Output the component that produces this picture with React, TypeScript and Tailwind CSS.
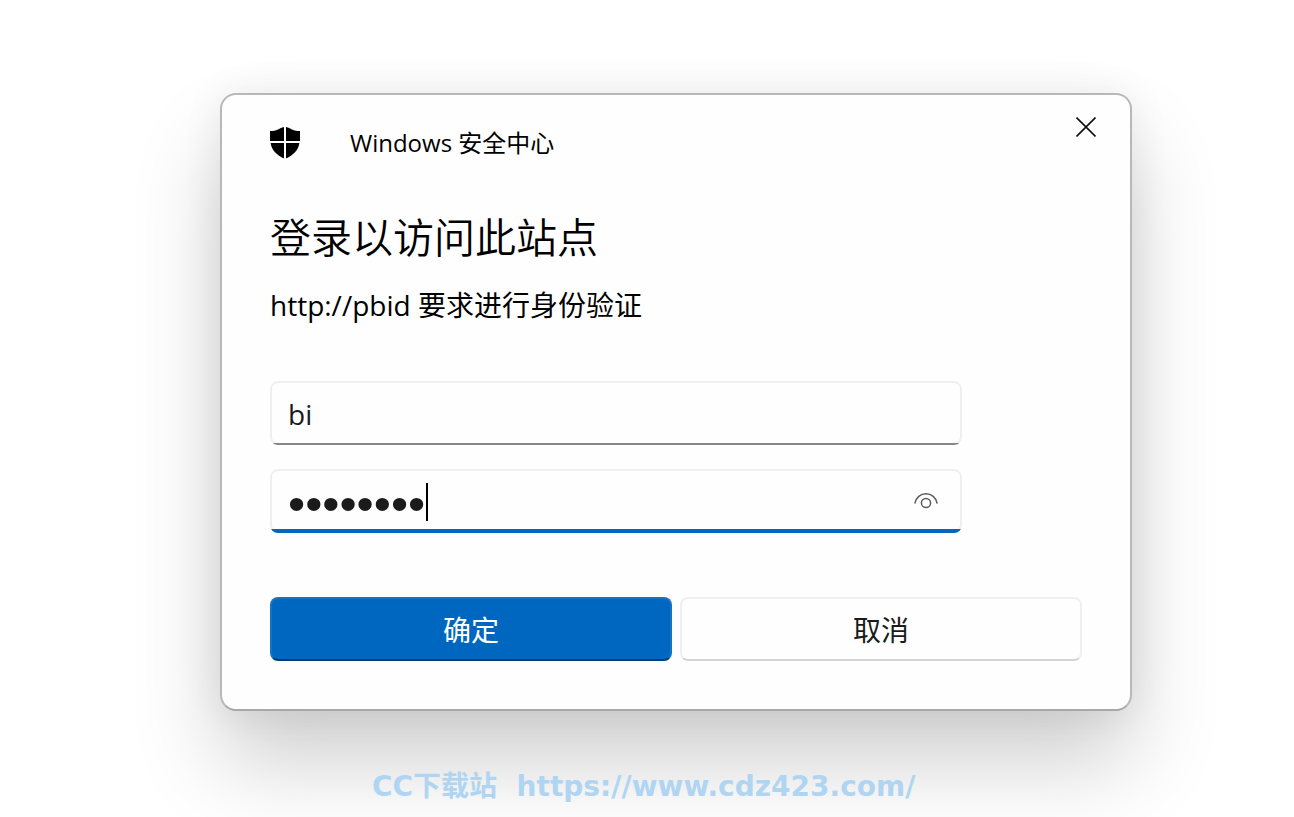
import React, { useState } from 'react';

const uiFont = 'font-["Open_Sans","Noto_Sans_CJK_SC",sans-serif]';

function ShieldIcon() {
  return (
    <svg className="w-[30px] h-8 shrink-0" viewBox="0 0 30 32" fill="#000" aria-hidden="true">
      <path d="M14 0v14H0V4c3 0 5.500-.3 8-1.500C10 1.500 11.500.3 14 0z" />
      <path d="M16 0v14h14V4c-3 0-5.500-.3-8-1.500C20 1.500 18.500.3 16 0z" />
      <path d="M14 16v15.500C7 28.500 1.500 23 .6 16z" />
      <path d="M16 16v15.500c7-3 12.500-8.500 13.400-15.500z" />
    </svg>
  );
}

function CloseIcon() {
  return (
    <svg className="w-5 h-5" viewBox="0 0 20 20" fill="none" stroke="#111" strokeWidth="1.6" aria-hidden="true">
      <path d="M.5.5l19 19M19.500.5l-19 19" />
    </svg>
  );
}

function EyeIcon() {
  return (
    <svg className="w-6 h-6" viewBox="0 0 24 24" fill="none" stroke="#5c5c5c" strokeWidth="1.5" aria-hidden="true">
      <path d="M.8 14.500C2 8.500 6.500 4.800 12 4.800S22 8.500 23.200 14.500" />
      <circle cx="12" cy="14" r="4.600" />
    </svg>
  );
}

export default function App() {
  const [username, setUsername] = useState<string>('bi');
  const [password, setPassword] = useState<string>('password');
  const [showPassword, setShowPassword] = useState<boolean>(false);

  const handleSubmit = (e: React.FormEvent) => {
    e.preventDefault();
  };

  return (
    <div className={`min-h-screen overflow-hidden bg-white text-black pt-[93px] pl-[220px] pr-[162px] ${uiFont}`}>
      <main
        role="dialog"
        aria-labelledby="dialog-title"
        className="rounded-2xl border-2 border-[#b8b8b8] border-b-[#a8a8a8] bg-[#fefefe] px-12 pb-12 pt-5 shadow-[0_52px_88px_rgba(0,0,0,0.19),0_0_40px_rgba(0,0,0,0.07)]"
      >
        <header className="flex items-start justify-between">
          <div className="flex items-center gap-[50px] pt-2.5">
            <ShieldIcon />
            <span className="text-2xl leading-9">Windows 安全中心</span>
          </div>
          <button type="button" aria-label="关闭" className="-mr-4 p-0.5">
            <CloseIcon />
          </button>
        </header>

        <h1 id="dialog-title" className="mt-12 text-[41px] leading-[56px] font-[350]">登录以访问此站点</h1>
        <p className="mt-5 text-[28px] leading-10">http://pbid 要求进行身份验证</p>

        <form onSubmit={handleSubmit} className="mt-14">
          <div className="mr-[120px] flex flex-col gap-6">
            <label className="relative block h-16 overflow-hidden rounded-lg">
              <input
                type="text"
                aria-label="用户名"
                className="h-16 w-full rounded-lg border-2 border-[#efefef] px-4 pt-0.5 text-[28px] text-[#1b1b1b] outline-none"
                value={username}
                onChange={e => setUsername(e.target.value)}
              />
              <span className="absolute inset-x-0 bottom-0 h-0.5 bg-[#868686]" />
            </label>

            <div className="relative h-16 overflow-hidden rounded-lg">
              <input
                type={showPassword ? 'text' : 'password'}
                aria-label="密码"
                className={`h-16 w-full rounded-lg border-2 border-[#efefef] pl-4 pr-16 text-[#1b1b1b] caret-transparent outline-none ${showPassword ? 'text-[28px]' : 'pt-1.5 font-["Liberation_Sans",sans-serif] text-[49px]'}`}
                value={password}
                onChange={e => setPassword(e.target.value)}
              />
              {!showPassword && <span className="absolute left-[156px] top-3.5 h-[38px] w-0.5 bg-black" />}
              <button
                type="button"
                aria-label="显示密码"
                className="absolute right-6 top-5"
                onClick={() => setShowPassword(!showPassword)}
              >
                <EyeIcon />
              </button>
              <span className="absolute inset-x-0 bottom-0 h-1 bg-[#0067c0]" />
            </div>
          </div>

          <div className="mt-16 grid grid-cols-2 gap-2 text-[28px]">
            <button type="submit" className="h-16 rounded-lg border-2 border-[#1473c5] border-b-[#003e73] bg-[#0067c0] pt-0.5 text-white">
              确定
            </button>
            <button type="button" className="h-16 rounded-lg border-2 border-[#efefef] border-b-[#d4d4d4] bg-[#fefefe] pt-0.5 text-[#1b1b1b]">
              取消
            </button>
          </div>
        </form>
      </main>

      <footer className='mt-14 pl-[152px] whitespace-pre text-[28px] leading-10 font-bold text-[#b0d5f2] font-["DejaVu_Sans","Noto_Sans_CJK_SC",sans-serif]'>
        CC下载站{'  '}<a href="https://www.cdz423.com/">https://www.cdz423.com/</a>
      </footer>
    </div>
  );
}
